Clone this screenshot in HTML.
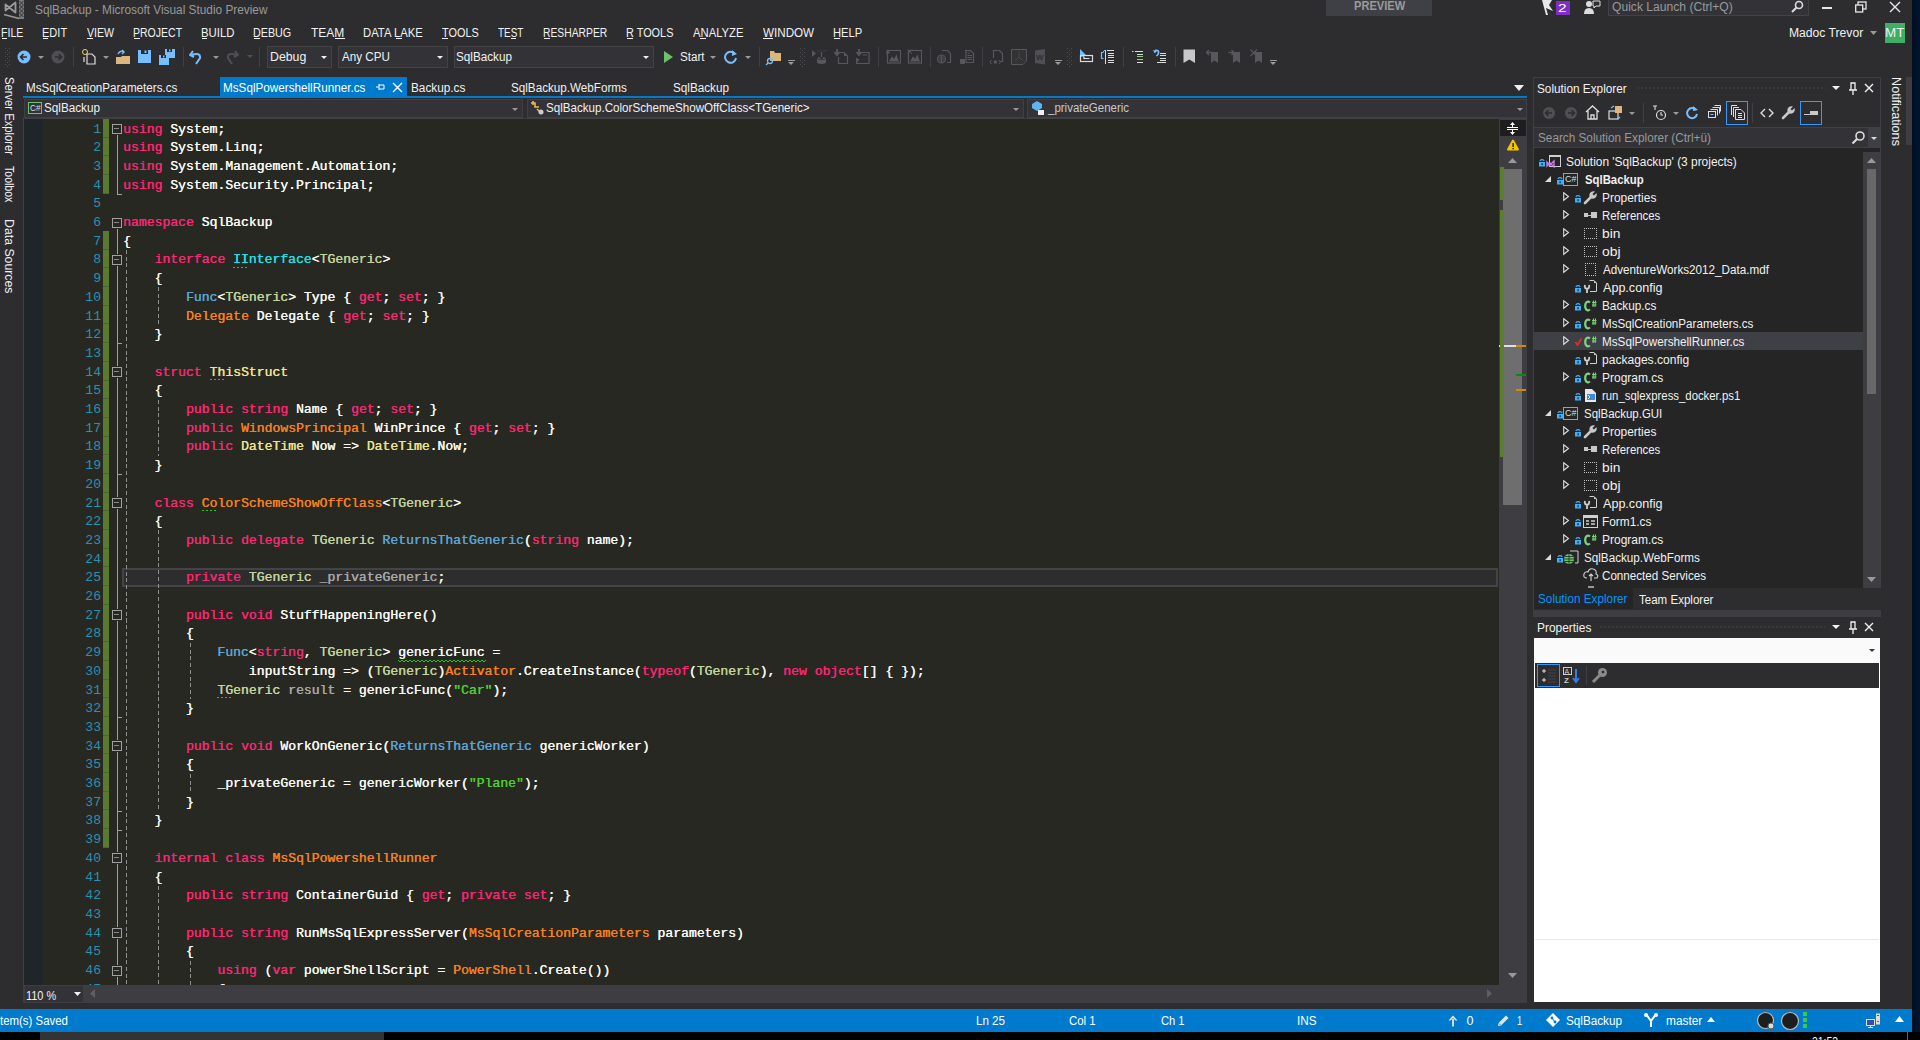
<!DOCTYPE html>
<html><head><meta charset="utf-8"><style>
*{box-sizing:border-box}
html,body{margin:0;padding:0}
body{width:1920px;height:1040px;overflow:hidden;position:relative;background:#2D2D30;font-family:"Liberation Sans",sans-serif;font-size:12px;color:#F1F1F1}
.a{position:absolute}
.t{position:absolute;white-space:pre;line-height:1}
/* editor */
#editor{position:absolute;left:24px;top:119px;width:1476px;height:866px;background:#272822;overflow:hidden}
#imargin{position:absolute;left:24px;top:119px;width:19px;height:866px;background:#1F2528}
.cl{position:absolute;left:123px;padding-top:1.5px;text-shadow:0.35px 0 0 currentColor;height:18.70px;line-height:18.70px;font-family:"Liberation Mono",monospace;font-size:13.1px;white-space:pre;color:#F8F8F2}
.ln{position:absolute;left:60px;padding-top:1.5px;width:41px;text-align:right;height:18.70px;line-height:18.70px;font-family:"Liberation Mono",monospace;font-size:13.1px;color:#2B91AF}
.k{color:#F92672}.i{color:#1EE0E6}.g{color:#C2D49C}.d{color:#5AA5D6}.o{color:#F5801F}.y{color:#EDE38C}.s{color:#50CC30}.v{color:#A8A8A8}

</style></head><body>
<svg class="a" style="left:0;top:0" width="26" height="20"><path d="M5.5 4.5 L15.5 12.5 L15.5 2.5 L5.5 10.5 Z" fill="none" stroke="#9a9a9a" stroke-width="1.8" stroke-linejoin="round"/><rect x="19" y="0" width="5" height="19" fill="#7a7a7a"/><path d="M19.5 1 L23.5 5 M19.5 5 L23.5 9 M19.5 9 L23.5 13 M19.5 13 L23.5 17 M23.5 1 L19.5 5 M23.5 5 L19.5 9 M23.5 9 L19.5 13 M23.5 13 L19.5 17" stroke="#2D2D30" stroke-width="0.9"/><path d="M4 14.5 L19 18.5" stroke="#9a9a9a" stroke-width="1.6"/></svg>
<div class="t" style="left:35.47px;top:3.53px;font-size:12.5px;color:#999999;transform:scaleX(0.9462);transform-origin:0 0;">SqlBackup - Microsoft Visual Studio Preview</div>
<div class="a" style="left:1326px;top:0;width:106px;height:16px;background:#3F3F46"></div>
<div class="t" style="left:1353.78px;top:-0.41px;font-size:12px;color:#9a9a9a;font-weight:bold;transform:scaleX(0.9249);transform-origin:0 0;">PREVIEW</div>
<svg class="a" style="left:1540px;top:0" width="16" height="16"><path d="M2 0 L12 0 L9 5 L13 11 L6 8 L8 15 L6 15 Z" fill="#e8e8e8"/></svg>
<div class="a" style="left:1556px;top:1px;width:14px;height:14px;background:#7E2FC8"></div>
<div class="t" style="left:1558.23px;top:2.71px;font-size:11px;color:#fff;transform:scaleX(1.3986);transform-origin:0 0;">2</div>
<svg class="a" style="left:1583px;top:0" width="18" height="16"><circle cx="6" cy="4" r="3" fill="#ddd"/><path d="M1 14 Q1 8 6 8 Q11 8 11 14 Z" fill="#ddd"/><path d="M10 1 L17 1 L17 6 L13 6 L11 8 L11 6 L10 6 Z" fill="none" stroke="#ddd" stroke-width="1"/></svg>
<div class="a" style="left:1608px;top:-2px;width:201px;height:18px;background:#333337;border:1px solid #434346"></div>
<div class="t" style="left:1612.46px;top:0.53px;font-size:12.5px;color:#999;transform:scaleX(0.9686);transform-origin:0 0;">Quick Launch (Ctrl+Q)</div>
<svg class="a" style="left:1790px;top:0" width="14" height="14"><circle cx="9" cy="5" r="3.5" fill="none" stroke="#ddd" stroke-width="1.6"/><path d="M6.5 7.5 L2 12" stroke="#ddd" stroke-width="2"/></svg>
<div class="a" style="left:1822px;top:7px;width:10px;height:2px;background:#e8e8e8"></div>
<svg class="a" style="left:1855px;top:1px" width="12" height="12"><rect x="3" y="1" width="8" height="7" fill="none" stroke="#e8e8e8" stroke-width="1.3"/><rect x="0.7" y="4" width="7" height="7" fill="#2D2D30" stroke="#e8e8e8" stroke-width="1.3"/></svg>
<svg class="a" style="left:1889px;top:1px" width="12" height="12"><path d="M1 1 L11 11 M11 1 L1 11" stroke="#e8e8e8" stroke-width="1.4"/></svg>
<div class="t" style="left:1.16px;top:26.53px;font-size:12.5px;color:#F1F1F1;transform:scaleX(0.8442);transform-origin:0 0;">FILE</div>
<div class="a" style="left:2.0px;top:38px;width:4.5px;height:1px;background:#F1F1F1"></div>
<div class="t" style="left:42.12px;top:26.53px;font-size:12.5px;color:#F1F1F1;transform:scaleX(0.8828);transform-origin:0 0;">EDIT</div>
<div class="a" style="left:43.0px;top:38px;width:5.1px;height:1px;background:#F1F1F1"></div>
<div class="t" style="left:86.95px;top:26.53px;font-size:12.5px;color:#F1F1F1;transform:scaleX(0.8487);transform-origin:0 0;">VIEW</div>
<div class="a" style="left:87.0px;top:38px;width:5.7px;height:1px;background:#F1F1F1"></div>
<div class="t" style="left:133.16px;top:26.53px;font-size:12.5px;color:#F1F1F1;transform:scaleX(0.8412);transform-origin:0 0;">PROJECT</div>
<div class="a" style="left:134.0px;top:38px;width:5.8px;height:1px;background:#F1F1F1"></div>
<div class="t" style="left:201.09px;top:26.53px;font-size:12.5px;color:#F1F1F1;transform:scaleX(0.9078);transform-origin:0 0;">BUILD</div>
<div class="a" style="left:202.0px;top:38px;width:5.4px;height:1px;background:#F1F1F1"></div>
<div class="t" style="left:253.14px;top:26.53px;font-size:12.5px;color:#F1F1F1;transform:scaleX(0.8599);transform-origin:0 0;">DEBUG</div>
<div class="a" style="left:254.0px;top:38px;width:6.2px;height:1px;background:#F1F1F1"></div>
<div class="t" style="left:310.76px;top:26.53px;font-size:12.5px;color:#F1F1F1;transform:scaleX(0.9570);transform-origin:0 0;">TEAM</div>
<div class="a" style="left:335.0px;top:38px;width:9.6px;height:1px;background:#F1F1F1"></div>
<div class="t" style="left:362.60px;top:26.53px;font-size:12.5px;color:#F1F1F1;transform:scaleX(0.9043);transform-origin:0 0;">DATA LAKE</div>
<div class="a" style="left:396.0px;top:38px;width:5.5px;height:1px;background:#F1F1F1"></div>
<div class="t" style="left:441.78px;top:26.53px;font-size:12.5px;color:#F1F1F1;transform:scaleX(0.8714);transform-origin:0 0;">TOOLS</div>
<div class="a" style="left:442.0px;top:38px;width:6.1px;height:1px;background:#F1F1F1"></div>
<div class="t" style="left:497.80px;top:26.53px;font-size:12.5px;color:#F1F1F1;transform:scaleX(0.7952);transform-origin:0 0;">TEST</div>
<div class="a" style="left:510.5px;top:38px;width:5.3px;height:1px;background:#F1F1F1"></div>
<div class="t" style="left:543.17px;top:26.53px;font-size:12.5px;color:#F1F1F1;transform:scaleX(0.8269);transform-origin:0 0;">RESHARPER</div>
<div class="a" style="left:544.0px;top:38px;width:6.0px;height:1px;background:#F1F1F1"></div>
<div class="t" style="left:626.13px;top:26.53px;font-size:12.5px;color:#F1F1F1;transform:scaleX(0.8710);transform-origin:0 0;">R TOOLS</div>
<div class="a" style="left:627.0px;top:38px;width:5.6px;height:1px;background:#F1F1F1"></div>
<div class="t" style="left:693.00px;top:26.53px;font-size:12.5px;color:#F1F1F1;transform:scaleX(0.9009);transform-origin:0 0;">ANALYZE</div>
<div class="a" style="left:700.1px;top:38px;width:6.1px;height:1px;background:#F1F1F1"></div>
<div class="t" style="left:762.94px;top:26.53px;font-size:12.5px;color:#F1F1F1;transform:scaleX(0.9315);transform-origin:0 0;">WINDOW</div>
<div class="a" style="left:763.0px;top:38px;width:10.2px;height:1px;background:#F1F1F1"></div>
<div class="t" style="left:833.11px;top:26.53px;font-size:12.5px;color:#F1F1F1;transform:scaleX(0.8935);transform-origin:0 0;">HELP</div>
<div class="a" style="left:834.0px;top:38px;width:5.9px;height:1px;background:#F1F1F1"></div>
<div class="t" style="left:1789.03px;top:27.28px;font-size:12.5px;color:#F1F1F1;transform:scaleX(0.9709);transform-origin:0 0;">Madoc Trevor</div>
<svg class="a" style="left:1870px;top:31px" width="8" height="5"><path d="M0 0 L7 0 L3.5 4 Z" fill="#999"/></svg>
<div class="a" style="left:1885px;top:23px;width:20px;height:20px;background:#3FAE64"></div>
<div class="t" style="left:1884.93px;top:27.03px;font-size:12.5px;color:#F1F1F1;transform:scaleX(1.0706);transform-origin:0 0;">MT</div>
<svg class="a" style="left:5px;top:47px" width="6" height="20"><rect x="0" y="1" width="1" height="1" fill="#505054"/><rect x="4" y="1" width="1" height="1" fill="#505054"/><rect x="2" y="3" width="1" height="1" fill="#505054"/><rect x="0" y="5" width="1" height="1" fill="#505054"/><rect x="4" y="5" width="1" height="1" fill="#505054"/><rect x="2" y="7" width="1" height="1" fill="#505054"/><rect x="0" y="9" width="1" height="1" fill="#505054"/><rect x="4" y="9" width="1" height="1" fill="#505054"/><rect x="2" y="11" width="1" height="1" fill="#505054"/><rect x="0" y="13" width="1" height="1" fill="#505054"/><rect x="4" y="13" width="1" height="1" fill="#505054"/><rect x="2" y="15" width="1" height="1" fill="#505054"/><rect x="0" y="17" width="1" height="1" fill="#505054"/><rect x="4" y="17" width="1" height="1" fill="#505054"/><rect x="2" y="19" width="1" height="1" fill="#505054"/></svg>
<svg class="a" style="left:17px;top:50px" width="14" height="14"><circle cx="7" cy="7" r="6.5" fill="#75BEFF"/><path d="M10 7 L4 7 M6.5 4 L3.5 7 L6.5 10" stroke="#2D2D30" stroke-width="1.6" fill="none"/></svg>
<svg class="a" style="left:38px;top:56px" width="7" height="4"><path d="M0 0 L6 0 L3.0 3 Z" fill="#999"/></svg>
<svg class="a" style="left:51px;top:50px" width="14" height="14"><circle cx="7" cy="7" r="6.5" fill="#505054"/><path d="M4 7 L10 7 M7.5 4 L10.5 7 L7.5 10" stroke="#2D2D30" stroke-width="1.6" fill="none"/></svg>
<div class="a" style="left:73px;top:47px;width:1px;height:20px;background:#3F3F46"></div>
<svg class="a" style="left:81px;top:48px" width="16" height="17"><path d="M6 6 L11 6 L14 9 L14 16 L6 16 Z M3 9 L3 14" fill="none" stroke="#dcdcdc" stroke-width="1.2"/><circle cx="4" cy="4" r="2.5" fill="none" stroke="#F0D070" stroke-width="1"/></svg>
<svg class="a" style="left:103px;top:56px" width="7" height="4"><path d="M0 0 L6 0 L3.0 3 Z" fill="#999"/></svg>
<svg class="a" style="left:115px;top:49px" width="16" height="16"><path d="M1 8 L6 8 L7 7 L15 7 L15 15 L1 15 Z" fill="#DCB67A"/><path d="M3 5 Q5 1 9 3 M7 1 L9 3 L7 5" stroke="#75BEFF" stroke-width="1.5" fill="none"/></svg>
<svg class="a" style="left:138px;top:50px" width="14" height="14"><path d="M0 0 L13 0 L13 13 L0 13 Z" fill="#75BEFF"/><rect x="3" y="0" width="7" height="4" fill="#2D2D30"/><rect x="6.5" y="0.5" width="2" height="2.5" fill="#75BEFF"/></svg>
<svg class="a" style="left:159px;top:49px" width="17" height="16"><rect x="6" y="0" width="10" height="9" fill="#75BEFF"/><rect x="8" y="0" width="5" height="3" fill="#2D2D30"/><rect x="10" y="0.5" width="1.5" height="2" fill="#75BEFF"/><rect x="0" y="6" width="10" height="10" fill="#75BEFF"/><rect x="2" y="6" width="5" height="3" fill="#2D2D30"/><rect x="4" y="6.5" width="1.5" height="2" fill="#75BEFF"/></svg>
<div class="a" style="left:183px;top:47px;width:1px;height:20px;background:#3F3F46"></div>
<svg class="a" style="left:189px;top:49px" width="14" height="16"><path d="M4 2 L1 6 L5 8 M2 6 Q12 3 11 9 L7 15" stroke="#75BEFF" stroke-width="2" fill="none"/></svg>
<svg class="a" style="left:213px;top:56px" width="7" height="4"><path d="M0 0 L6 0 L3.0 3 Z" fill="#999"/></svg>
<svg class="a" style="left:225px;top:49px" width="14" height="16"><path d="M10 2 L13 6 L9 8 M12 6 Q2 3 3 9 L7 15" stroke="#505054" stroke-width="2" fill="none"/></svg>
<svg class="a" style="left:247px;top:55px" width="7" height="4"><path d="M0 0 L6 0 L3.0 3 Z" fill="#505054"/></svg>
<div class="a" style="left:259px;top:47px;width:1px;height:20px;background:#3F3F46"></div>
<div class="a" style="left:267px;top:46px;width:65px;height:22px;background:#333337;border:1px solid #434346"></div>
<div class="t" style="left:270.01px;top:50.53px;font-size:12.5px;color:#F1F1F1;transform:scaleX(0.9857);transform-origin:0 0;">Debug</div>
<svg class="a" style="left:321px;top:56px" width="7" height="4"><path d="M0 0 L6 0 L3.0 3 Z" fill="#F1F1F1"/></svg>
<div class="a" style="left:338px;top:46px;width:110px;height:22px;background:#333337;border:1px solid #434346"></div>
<div class="t" style="left:342.00px;top:50.53px;font-size:12.5px;color:#F1F1F1;transform:scaleX(0.9318);transform-origin:0 0;">Any CPU</div>
<svg class="a" style="left:437px;top:56px" width="7" height="4"><path d="M0 0 L6 0 L3.0 3 Z" fill="#F1F1F1"/></svg>
<div class="a" style="left:454px;top:46px;width:200px;height:22px;background:#333337;border:1px solid #434346"></div>
<div class="t" style="left:456.47px;top:50.53px;font-size:12.5px;color:#F1F1F1;transform:scaleX(0.9372);transform-origin:0 0;">SqlBackup</div>
<svg class="a" style="left:643px;top:56px" width="7" height="4"><path d="M0 0 L6 0 L3.0 3 Z" fill="#F1F1F1"/></svg>
<svg class="a" style="left:664px;top:51px" width="10" height="13"><path d="M0 0 L9 6 L0 12 Z" fill="#6CC26C"/></svg>
<div class="t" style="left:680.48px;top:50.53px;font-size:12.5px;color:#F1F1F1;transform:scaleX(0.9320);transform-origin:0 0;">Start</div>
<svg class="a" style="left:710px;top:56px" width="7" height="4"><path d="M0 0 L6 0 L3.0 3 Z" fill="#999"/></svg>
<svg class="a" style="left:724px;top:49px" width="14" height="16"><path d="M11 5 A5.5 5.5 0 1 0 12 9" stroke="#75BEFF" stroke-width="2" fill="none"/><path d="M8 1 L13 5 L8 7 Z" fill="#75BEFF"/></svg>
<svg class="a" style="left:745px;top:56px" width="7" height="4"><path d="M0 0 L6 0 L3.0 3 Z" fill="#999"/></svg>
<div class="a" style="left:759px;top:47px;width:1px;height:20px;background:#3F3F46"></div>
<svg class="a" style="left:765px;top:49px" width="17" height="17"><path d="M5 2 L9 2 L10 4 L16 4 L16 12 L5 12 Z" fill="#DCB67A"/><circle cx="5" cy="12" r="2.5" fill="none" stroke="#75BEFF" stroke-width="1.3"/><path d="M3 14 L1 16" stroke="#75BEFF" stroke-width="1.5"/></svg>
<div class="a" style="left:788px;top:60px;width:7px;height:1px;background:#999"></div>
<svg class="a" style="left:788px;top:62px" width="7" height="4"><path d="M0 0 L6 0 L3.0 3 Z" fill="#999"/></svg>
<svg class="a" style="left:800px;top:47px" width="6" height="20"><rect x="0" y="1" width="1" height="1" fill="#505054"/><rect x="4" y="1" width="1" height="1" fill="#505054"/><rect x="2" y="3" width="1" height="1" fill="#505054"/><rect x="0" y="5" width="1" height="1" fill="#505054"/><rect x="4" y="5" width="1" height="1" fill="#505054"/><rect x="2" y="7" width="1" height="1" fill="#505054"/><rect x="0" y="9" width="1" height="1" fill="#505054"/><rect x="4" y="9" width="1" height="1" fill="#505054"/><rect x="2" y="11" width="1" height="1" fill="#505054"/><rect x="0" y="13" width="1" height="1" fill="#505054"/><rect x="4" y="13" width="1" height="1" fill="#505054"/><rect x="2" y="15" width="1" height="1" fill="#505054"/><rect x="0" y="17" width="1" height="1" fill="#505054"/><rect x="4" y="17" width="1" height="1" fill="#505054"/><rect x="2" y="19" width="1" height="1" fill="#505054"/></svg>
<svg class="a" style="left:811px;top:49px" width="16" height="16"><path d="M1 1 L5 4.5 L1 8 Z" fill="#58585c"/><path d="M6 9 L6 14 Q10.5 16 15 14 L15 9" fill="#58585c"/><ellipse cx="10.5" cy="9" rx="4.5" ry="1.6" fill="#58585c" stroke="#2D2D30" stroke-width="0.8"/><path d="M10.5 3 L10.5 9 M8.5 7 L10.5 9.5 L12.5 7" stroke="#2D2D30" stroke-width="1.3" fill="none"/><path d="M10.5 3 L10.5 8" stroke="#58585c" stroke-width="1.3"/><circle cx="7" cy="2" r="0.6" fill="#58585c"/><circle cx="10" cy="1" r="0.6" fill="#58585c"/><circle cx="13" cy="2" r="0.6" fill="#58585c"/><circle cx="15" cy="1.5" r="0.6" fill="#58585c"/></svg>
<svg class="a" style="left:834px;top:49px" width="15" height="16"><path d="M3 0 L3 5 M0.5 3 L3 6 L5.5 3" stroke="#58585c" stroke-width="1.8" fill="none"/><path d="M4.5 3.5 L10 3.5 L13.5 7 L13.5 14.5 L4.5 14.5 L4.5 8" stroke="#58585c" stroke-width="1.2" fill="none"/><path d="M10 3.5 L10 7 L13.5 7" fill="#58585c"/></svg>
<svg class="a" style="left:856px;top:49px" width="14" height="16"><path d="M3 0 L3 5 M0.5 3 L3 6 L5.5 3" stroke="#58585c" stroke-width="1.8" fill="none"/><path d="M5 3.5 L13 3.5 L13 14.5 L0.5 14.5 L0.5 9" stroke="#58585c" stroke-width="1.2" fill="none"/><path d="M6.5 6 L11 6 M1 10 L2.5 10.5 L1 11.5 L2.5 12.5" stroke="#58585c" stroke-width="1.1" fill="none"/></svg>
<div class="a" style="left:878px;top:47px;width:1px;height:20px;background:#3F3F46"></div>
<svg class="a" style="left:886px;top:49px" width="15" height="15"><rect x="1.5" y="1.5" width="13" height="12.5" fill="none" stroke="#58585c" stroke-width="1.2"/><path d="M3 12.5 L6 7 L8 10 L10.5 4.5 L13 12.5 Z" fill="#58585c"/><path d="M3 11 L6 6 L8 9 L10.5 4.5 L13 11" stroke="#2D2D30" stroke-width="0.8" fill="none"/><path d="M0.5 0.5 L4 3.5 L0.5 6 Z" fill="#58585c"/></svg>
<svg class="a" style="left:907px;top:49px" width="15" height="15"><rect x="1.5" y="1.5" width="13" height="12.5" fill="none" stroke="#58585c" stroke-width="1.2"/><path d="M3 12.5 L6 7 L8 10 L10.5 4.5 L13 12.5 Z" fill="#58585c"/><path d="M3 11 L6 6 L8 9 L10.5 4.5 L13 11" stroke="#2D2D30" stroke-width="0.8" fill="none"/><path d="M0.5 0.5 L5 5 M5 0.5 L0.5 5" stroke="#58585c" stroke-width="1"/></svg>
<div class="a" style="left:930px;top:47px;width:1px;height:20px;background:#3F3F46"></div>
<svg class="a" style="left:937px;top:49px" width="15" height="15"><path d="M5 1.5 L10.5 1.5 L13.5 4.5 L13.5 13.5 L10 13.5" stroke="#58585c" stroke-width="1.2" fill="none"/><circle cx="4.5" cy="10" r="4" fill="none" stroke="#58585c" stroke-width="1.1"/><path d="M0.5 10 L8.5 10 M4.5 6 L4.5 14 M1.5 8 L7.5 8 M1.5 12 L7.5 12" stroke="#58585c" stroke-width="0.9"/></svg>
<svg class="a" style="left:960px;top:49px" width="15" height="16"><path d="M5 1.5 L10.5 1.5 L13.5 4.5 L13.5 13.5 L6 13.5 L6 1.5" stroke="#58585c" stroke-width="1.2" fill="none"/><path d="M7.5 4 L10 4 M7.5 6.5 L12 6.5 M7.5 8.5 L12 8.5 M7.5 10.5 L12 10.5" stroke="#58585c" stroke-width="1"/><path d="M0 10 L0 14.5 Q2.5 15.5 5 14.5 L5 10 Z" fill="#58585c"/></svg>
<div class="a" style="left:982px;top:47px;width:1px;height:20px;background:#3F3F46"></div>
<svg class="a" style="left:989px;top:49px" width="15" height="16"><path d="M4.5 9 L4.5 1.5 L10.5 1.5 L13.5 4.5 L13.5 12.5 L11.5 12.5" stroke="#58585c" stroke-width="1.2" fill="none"/><path d="M2.5 11 L1 13 L2.5 15 M10 11 L11.5 13 L10 15" stroke="#58585c" stroke-width="1" fill="none"/><circle cx="6.3" cy="13" r="1.8" fill="#58585c"/></svg>
<svg class="a" style="left:1011px;top:49px" width="16" height="16"><path d="M0.5 0.5 L15.5 0.5 L15.5 12 L12 15.5 L0.5 15.5 Z" fill="#333336" stroke="#58585c" stroke-width="1"/><path d="M8 3 L8 8 L4 12 M8 8 L12 12" stroke="#48484c" stroke-width="1" fill="none"/></svg>
<svg class="a" style="left:1035px;top:49px" width="10" height="16"><path d="M0 1.5 L10 0 L10 15.5 L0 14 Z" fill="#505054"/><text x="1" y="11" font-size="8" font-weight="bold" fill="#2D2D30" font-family="Liberation Sans">W</text></svg>
<div class="a" style="left:1055px;top:60px;width:7px;height:1px;background:#999"></div>
<svg class="a" style="left:1055px;top:62px" width="7" height="4"><path d="M0 0 L6 0 L3.0 3 Z" fill="#999"/></svg>
<svg class="a" style="left:1067px;top:47px" width="6" height="20"><rect x="0" y="1" width="1" height="1" fill="#505054"/><rect x="4" y="1" width="1" height="1" fill="#505054"/><rect x="2" y="3" width="1" height="1" fill="#505054"/><rect x="0" y="5" width="1" height="1" fill="#505054"/><rect x="4" y="5" width="1" height="1" fill="#505054"/><rect x="2" y="7" width="1" height="1" fill="#505054"/><rect x="0" y="9" width="1" height="1" fill="#505054"/><rect x="4" y="9" width="1" height="1" fill="#505054"/><rect x="2" y="11" width="1" height="1" fill="#505054"/><rect x="0" y="13" width="1" height="1" fill="#505054"/><rect x="4" y="13" width="1" height="1" fill="#505054"/><rect x="2" y="15" width="1" height="1" fill="#505054"/><rect x="0" y="17" width="1" height="1" fill="#505054"/><rect x="4" y="17" width="1" height="1" fill="#505054"/><rect x="2" y="19" width="1" height="1" fill="#505054"/></svg>
<svg class="a" style="left:1079px;top:49px" width="15" height="15"><path d="M1 0 L1 9 L3.3 7 L5 10.5 L6.5 9.8 L4.8 6.5 L7.5 6.5 Z" fill="#75BEFF"/><rect x="1.5" y="6.5" width="12" height="6" fill="none" stroke="#dcdcdc" stroke-width="1.2"/><path d="M4.5 9.5 L10.5 9.5" stroke="#dcdcdc" stroke-width="1.1"/></svg>
<svg class="a" style="left:1100px;top:49px" width="16" height="16"><path d="M3.5 3.5 L1.5 3.5 L1.5 9.5 L3.5 9.5" stroke="#75BEFF" stroke-width="1.2" fill="none"/><path d="M3 3 L5 1" stroke="#75BEFF" stroke-width="1"/><path d="M5.5 1 L5.5 15 M7 1.5 L14 1.5 M8 4.5 L14 4.5 M8 6.5 L14 6.5 M8 8.5 L14 8.5 M8 11.5 L14 11.5 M8 13.5 L14 13.5" stroke="#dcdcdc" stroke-width="1"/></svg>
<div class="a" style="left:1123px;top:47px;width:1px;height:20px;background:#3F3F46"></div>
<svg class="a" style="left:1132px;top:49px" width="12" height="14"><path d="M0 2.5 L1.5 2.5 M3 2.5 L11 2.5 M5 13.5 L11 13.5 M5 5.5 L11 5.5" stroke="#dcdcdc" stroke-width="1"/><path d="M5 7.5 L11 7.5 M5 10.5 L11 10.5" stroke="#8BD27A" stroke-width="1"/></svg>
<svg class="a" style="left:1153px;top:49px" width="14" height="16"><path d="M1.5 3.5 Q2 0.5 4.5 1.5 Q6.5 2.5 5 5.5 L3.5 7" stroke="#75BEFF" stroke-width="1.6" fill="none"/><path d="M0 1 L1.5 4 L4 2.5" fill="#75BEFF"/><path d="M7 4.5 L13 4.5 M7 6.5 L13 6.5 M7 9.5 L13 9.5 M7 11.5 L13 11.5 M4 13.5 L13 13.5" stroke="#dcdcdc" stroke-width="1"/></svg>
<div class="a" style="left:1175px;top:47px;width:1px;height:20px;background:#3F3F46"></div>
<svg class="a" style="left:1183px;top:49px" width="13" height="15"><path d="M0.5 0.5 L12 0.5 L12 14 L6.3 10.5 L0.5 14 Z" fill="#c8c8c8"/></svg>
<svg class="a" style="left:1206px;top:49px" width="13" height="15"><path d="M5 3 L12 3 L12 14 L8.5 11.5 L5 14 Z" fill="#58585c"/><path d="M0.5 3.5 L6 3.5 M3 1 L0.5 3.5 L3 6" stroke="#58585c" stroke-width="1.3" fill="none"/></svg>
<svg class="a" style="left:1228px;top:49px" width="13" height="15"><path d="M5 3 L12 3 L12 14 L8.5 11.5 L5 14 Z" fill="#58585c"/><path d="M0.5 3.5 L6 3.5 M3.5 1 L6 3.5 L3.5 6" stroke="#58585c" stroke-width="1.3" fill="none"/></svg>
<svg class="a" style="left:1250px;top:49px" width="13" height="15"><path d="M5 3 L12 3 L12 14 L8.5 11.5 L5 14 Z" fill="#58585c"/><path d="M0.5 0.5 L7 7 M7 0.5 L0.5 7" stroke="#58585c" stroke-width="1.3" fill="none"/></svg>
<div class="a" style="left:1270px;top:60px;width:7px;height:1px;background:#999"></div>
<svg class="a" style="left:1270px;top:62px" width="7" height="4"><path d="M0 0 L6 0 L3.0 3 Z" fill="#999"/></svg>
<div class="a" style="left:14px;top:76.6px;transform-origin:0 0;transform:rotate(90deg)"><div class="t" style="left:-0.51px;top:-1.47px;font-size:12.5px;color:#F1F1F1;transform:scaleX(0.8993);transform-origin:0 0;">Server Explorer</div></div>
<div class="a" style="left:14px;top:166.0px;transform-origin:0 0;transform:rotate(90deg)"><div class="t" style="left:-0.21px;top:-1.47px;font-size:12.5px;color:#F1F1F1;transform:scaleX(0.8433);transform-origin:0 0;">Toolbox</div></div>
<div class="a" style="left:14px;top:220.4px;transform-origin:0 0;transform:rotate(90deg)"><div class="t" style="left:-0.98px;top:-1.47px;font-size:12.5px;color:#F1F1F1;transform:scaleX(0.9837);transform-origin:0 0;">Data Sources</div></div>
<div class="a" style="left:23px;top:98px;width:1px;height:905px;background:#3F3F46"></div>
<div class="a" style="left:1900.5px;top:77.5px;transform-origin:0 0;transform:rotate(90deg)"><div class="t" style="left:-1.01px;top:-1.47px;font-size:12.5px;color:#F1F1F1;transform:scaleX(1.0131);transform-origin:0 0;">Notifications</div></div>
<div class="t" style="left:26.07px;top:81.53px;font-size:12.5px;color:#F1F1F1;transform:scaleX(0.9310);transform-origin:0 0;">MsSqlCreationParameters.cs</div>
<div class="a" style="left:220px;top:77px;width:187px;height:20px;background:#007ACC"></div>
<div class="t" style="left:223.06px;top:81.53px;font-size:12.5px;color:#fff;transform:scaleX(0.9357);transform-origin:0 0;">MsSqlPowershellRunner.cs</div>
<svg class="a" style="left:375px;top:82px" width="11" height="11"><path d="M1 5 L4 5 M4 2 L4 8 M4 3 L9 3 L9 7 L4 7" fill="none" stroke="#fff" stroke-width="1"/></svg>
<svg class="a" style="left:392px;top:82px" width="11" height="11"><path d="M1 1 L10 10 M10 1 L1 10" stroke="#fff" stroke-width="1.4"/></svg>
<div class="t" style="left:411.06px;top:81.53px;font-size:12.5px;color:#F1F1F1;transform:scaleX(0.9422);transform-origin:0 0;">Backup.cs</div>
<div class="t" style="left:511.47px;top:81.53px;font-size:12.5px;color:#F1F1F1;transform:scaleX(0.9340);transform-origin:0 0;">SqlBackup.WebForms</div>
<div class="t" style="left:673.47px;top:81.53px;font-size:12.5px;color:#F1F1F1;transform:scaleX(0.9372);transform-origin:0 0;">SqlBackup</div>
<svg class="a" style="left:1514px;top:85px" width="11" height="7"><path d="M0 0 L10 0 L5 6 Z" fill="#F1F1F1"/></svg>
<div class="a" style="left:23px;top:96px;width:1504px;height:2px;background:#007ACC"></div>
<div class="a" style="left:23px;top:98px;width:1504px;height:21px;background:#2D2D30;border-bottom:1px solid #3F3F46"></div>
<div class="a" style="left:24px;top:99px;width:499px;height:19px;border:1px solid #3F3F46;background:#333337"></div>
<div class="a" style="left:527px;top:99px;width:497px;height:19px;border:1px solid #3F3F46;background:#333337"></div>
<div class="a" style="left:1027px;top:99px;width:500px;height:19px;border:1px solid #3F3F46;background:#333337"></div>
<div class="a" style="left:28px;top:102px;width:14px;height:12px;border:1px solid #6DC26D"></div>
<div class="t" style="left:29.59px;top:103.94px;font-size:9px;color:#ddd;transform:scaleX(0.9107);transform-origin:0 0;">C#</div>
<div class="t" style="left:44.47px;top:102.03px;font-size:12.5px;color:#F1F1F1;transform:scaleX(0.9372);transform-origin:0 0;">SqlBackup</div>
<svg class="a" style="left:512px;top:108px" width="7" height="4"><path d="M0 0 L6 0 L3.0 3 Z" fill="#999"/></svg>
<svg class="a" style="left:529px;top:100px" width="16" height="16"><path d="M2 3 L6 3 L6 7 L10 7 M4 1 L4 5 M8 9 L12 13" stroke="#E8B65A" stroke-width="1.6" fill="none"/><circle cx="12" cy="12" r="2.5" fill="#ccc"/></svg>
<div class="t" style="left:546.48px;top:102.03px;font-size:12.5px;color:#F1F1F1;transform:scaleX(0.9284);transform-origin:0 0;">SqlBackup.ColorSchemeShowOffClass&lt;TGeneric&gt;</div>
<svg class="a" style="left:1013px;top:108px" width="7" height="4"><path d="M0 0 L6 0 L3.0 3 Z" fill="#999"/></svg>
<svg class="a" style="left:1030px;top:100px" width="16" height="16"><path d="M2 4 L7 1 L12 4 L12 8 L7 11 L2 8 Z" fill="#5FB3F0"/><rect x="8" y="10" width="6" height="5" fill="#eee"/></svg>
<div class="t" style="left:1048.17px;top:102.03px;font-size:12.5px;color:#c8c8c8;transform:scaleX(0.9191);transform-origin:0 0;">_privateGeneric</div>
<svg class="a" style="left:1517px;top:108px" width="7" height="4"><path d="M0 0 L6 0 L3.0 3 Z" fill="#999"/></svg>
<!-- ===== EDITOR ===== -->
<div id="editor"></div>
<div id="imargin"></div>
<div class="a" style="left:122px;top:568px;width:1376px;height:19px;background:#2D2D2D;border:2px solid #424448"></div>
<div class="a" style="left:103px;top:119.00px;width:6px;height:74.80px;background:repeating-linear-gradient(#5A7A32 0 17.72px,#4C672B 17.72px 18.69px)"></div>
<div class="a" style="left:103px;top:231.20px;width:6px;height:617.10px;background:repeating-linear-gradient(#5A7A32 0 17.72px,#4C672B 17.72px 18.69px)"></div>
<div class="a" style="left:117px;top:135.0px;width:1px;height:60.0px;background:#A0A0A0"></div>
<div class="a" style="left:117px;top:194.0px;width:5px;height:1px;background:#A0A0A0"></div>
<div class="a" style="left:117px;top:229.0px;width:1px;height:756.0px;background:#A0A0A0"></div>
<div class="a" style="left:117px;top:343.0px;width:5px;height:1px;background:#A0A0A0"></div>
<div class="a" style="left:117px;top:474.0px;width:5px;height:1px;background:#A0A0A0"></div>
<div class="a" style="left:117px;top:717.0px;width:5px;height:1px;background:#A0A0A0"></div>
<div class="a" style="left:117px;top:811.0px;width:5px;height:1px;background:#A0A0A0"></div>
<div class="a" style="left:117px;top:830.0px;width:5px;height:1px;background:#A0A0A0"></div>
<div class="a" style="left:112px;top:124px;width:10px;height:10px;border:1px solid #A0A0A0;background:#272822;box-shadow:0 0 0 1px #272822"></div>
<div class="a" style="left:114px;top:128px;width:5px;height:1px;background:#888"></div>
<div class="a" style="left:112px;top:218px;width:10px;height:10px;border:1px solid #A0A0A0;background:#272822;box-shadow:0 0 0 1px #272822"></div>
<div class="a" style="left:114px;top:222px;width:5px;height:1px;background:#888"></div>
<div class="a" style="left:112px;top:255px;width:10px;height:10px;border:1px solid #A0A0A0;background:#272822;box-shadow:0 0 0 1px #272822"></div>
<div class="a" style="left:114px;top:259px;width:5px;height:1px;background:#888"></div>
<div class="a" style="left:112px;top:367px;width:10px;height:10px;border:1px solid #A0A0A0;background:#272822;box-shadow:0 0 0 1px #272822"></div>
<div class="a" style="left:114px;top:371px;width:5px;height:1px;background:#888"></div>
<div class="a" style="left:112px;top:498px;width:10px;height:10px;border:1px solid #A0A0A0;background:#272822;box-shadow:0 0 0 1px #272822"></div>
<div class="a" style="left:114px;top:502px;width:5px;height:1px;background:#888"></div>
<div class="a" style="left:112px;top:610px;width:10px;height:10px;border:1px solid #A0A0A0;background:#272822;box-shadow:0 0 0 1px #272822"></div>
<div class="a" style="left:114px;top:614px;width:5px;height:1px;background:#888"></div>
<div class="a" style="left:112px;top:741px;width:10px;height:10px;border:1px solid #A0A0A0;background:#272822;box-shadow:0 0 0 1px #272822"></div>
<div class="a" style="left:114px;top:745px;width:5px;height:1px;background:#888"></div>
<div class="a" style="left:112px;top:853px;width:10px;height:10px;border:1px solid #A0A0A0;background:#272822;box-shadow:0 0 0 1px #272822"></div>
<div class="a" style="left:114px;top:857px;width:5px;height:1px;background:#888"></div>
<div class="a" style="left:112px;top:928px;width:10px;height:10px;border:1px solid #A0A0A0;background:#272822;box-shadow:0 0 0 1px #272822"></div>
<div class="a" style="left:114px;top:932px;width:5px;height:1px;background:#888"></div>
<div class="a" style="left:112px;top:966px;width:10px;height:10px;border:1px solid #A0A0A0;background:#272822;box-shadow:0 0 0 1px #272822"></div>
<div class="a" style="left:114px;top:970px;width:5px;height:1px;background:#888"></div>
<div class="a" style="left:126px;top:249.9px;width:1px;height:735.1px;background:repeating-linear-gradient(#8f8f8f 0 4px,transparent 4px 6.7px)"></div>
<div class="a" style="left:158px;top:287.3px;width:1px;height:37.4px;background:repeating-linear-gradient(#8f8f8f 0 4px,transparent 4px 6.7px)"></div>
<div class="a" style="left:158px;top:399.5px;width:1px;height:56.1px;background:repeating-linear-gradient(#8f8f8f 0 4px,transparent 4px 6.7px)"></div>
<div class="a" style="left:158px;top:530.4px;width:1px;height:280.5px;background:repeating-linear-gradient(#8f8f8f 0 4px,transparent 4px 6.7px)"></div>
<div class="a" style="left:158px;top:885.7px;width:1px;height:99.3px;background:repeating-linear-gradient(#8f8f8f 0 4px,transparent 4px 6.7px)"></div>
<div class="a" style="left:190px;top:642.6px;width:1px;height:56.1px;background:repeating-linear-gradient(#8f8f8f 0 4px,transparent 4px 6.7px)"></div>
<div class="a" style="left:190px;top:773.5px;width:1px;height:18.7px;background:repeating-linear-gradient(#8f8f8f 0 4px,transparent 4px 6.7px)"></div>
<div class="a" style="left:190px;top:960.5px;width:1px;height:24.5px;background:repeating-linear-gradient(#8f8f8f 0 4px,transparent 4px 6.7px)"></div>
<div class="a" style="left:233.0px;top:267.0px;width:15.7px;height:1px;background:repeating-linear-gradient(90deg,#1EC81E 0 2px,transparent 2px 4px)"></div>
<div class="a" style="left:209.5px;top:379.0px;width:15.7px;height:1px;background:repeating-linear-gradient(90deg,#1EC81E 0 2px,transparent 2px 4px)"></div>
<div class="a" style="left:201.6px;top:510.0px;width:15.7px;height:1px;background:repeating-linear-gradient(90deg,#1EC81E 0 2px,transparent 2px 4px)"></div>
<div class="a" style="left:217.3px;top:697.0px;width:15.7px;height:1px;background:repeating-linear-gradient(90deg,#1EC81E 0 2px,transparent 2px 4px)"></div>
<svg class="a" style="left:398.1px;top:659.0px" width="88" height="4"><path d="M0 1 L2 3 L4 1 L6 3 L8 1 L10 3 L12 1 L14 3 L16 1 L18 3 L20 1 L22 3 L24 1 L26 3 L28 1 L30 3 L32 1 L34 3 L36 1 L38 3 L40 1 L42 3 L44 1 L46 3 L48 1 L50 3 L52 1 L54 3 L56 1 L58 3 L60 1 L62 3 L64 1 L66 3 L68 1 L70 3 L72 1 L74 3 L76 1 L78 3 L80 1 L82 3 L84 1 L86 3 L88 1" stroke="#1EC81E" stroke-width="1" fill="none"/></svg>
<div class="cl" style="top:119.00px"><span class="k">using</span> System;</div>
<div class="ln" style="top:119.00px">1</div>
<div class="cl" style="top:137.70px"><span class="k">using</span> System.Linq;</div>
<div class="ln" style="top:137.70px">2</div>
<div class="cl" style="top:156.40px"><span class="k">using</span> System.Management.Automation;</div>
<div class="ln" style="top:156.40px">3</div>
<div class="cl" style="top:175.10px"><span class="k">using</span> System.Security.Principal;</div>
<div class="ln" style="top:175.10px">4</div>
<div class="cl" style="top:193.80px"></div>
<div class="ln" style="top:193.80px">5</div>
<div class="cl" style="top:212.50px"><span class="k">namespace</span> SqlBackup</div>
<div class="ln" style="top:212.50px">6</div>
<div class="cl" style="top:231.20px">{</div>
<div class="ln" style="top:231.20px">7</div>
<div class="cl" style="top:249.90px">    <span class="k">interface</span> <span class="i">IInterface</span>&lt;<span class="g">TGeneric</span>&gt;</div>
<div class="ln" style="top:249.90px">8</div>
<div class="cl" style="top:268.60px">    {</div>
<div class="ln" style="top:268.60px">9</div>
<div class="cl" style="top:287.30px">        <span class="d">Func</span>&lt;<span class="g">TGeneric</span>&gt; Type { <span class="k">get</span>; <span class="k">set</span>; }</div>
<div class="ln" style="top:287.30px">10</div>
<div class="cl" style="top:306.00px">        <span class="o">Delegate</span> Delegate { <span class="k">get</span>; <span class="k">set</span>; }</div>
<div class="ln" style="top:306.00px">11</div>
<div class="cl" style="top:324.70px">    }</div>
<div class="ln" style="top:324.70px">12</div>
<div class="cl" style="top:343.40px"></div>
<div class="ln" style="top:343.40px">13</div>
<div class="cl" style="top:362.10px">    <span class="k">struct</span> <span class="y">ThisStruct</span></div>
<div class="ln" style="top:362.10px">14</div>
<div class="cl" style="top:380.80px">    {</div>
<div class="ln" style="top:380.80px">15</div>
<div class="cl" style="top:399.50px">        <span class="k">public</span> <span class="k">string</span> Name { <span class="k">get</span>; <span class="k">set</span>; }</div>
<div class="ln" style="top:399.50px">16</div>
<div class="cl" style="top:418.20px">        <span class="k">public</span> <span class="o">WindowsPrincipal</span> WinPrince { <span class="k">get</span>; <span class="k">set</span>; }</div>
<div class="ln" style="top:418.20px">17</div>
<div class="cl" style="top:436.90px">        <span class="k">public</span> <span class="y">DateTime</span> Now =&gt; <span class="y">DateTime</span>.Now;</div>
<div class="ln" style="top:436.90px">18</div>
<div class="cl" style="top:455.60px">    }</div>
<div class="ln" style="top:455.60px">19</div>
<div class="cl" style="top:474.30px"></div>
<div class="ln" style="top:474.30px">20</div>
<div class="cl" style="top:493.00px">    <span class="k">class</span> <span class="o">ColorSchemeShowOffClass</span>&lt;<span class="g">TGeneric</span>&gt;</div>
<div class="ln" style="top:493.00px">21</div>
<div class="cl" style="top:511.70px">    {</div>
<div class="ln" style="top:511.70px">22</div>
<div class="cl" style="top:530.40px">        <span class="k">public</span> <span class="k">delegate</span> <span class="g">TGeneric</span> <span class="d">ReturnsThatGeneric</span>(<span class="k">string</span> name);</div>
<div class="ln" style="top:530.40px">23</div>
<div class="cl" style="top:549.10px"></div>
<div class="ln" style="top:549.10px">24</div>
<div class="cl" style="top:567.80px">        <span class="k">private</span> <span class="g">TGeneric</span><span class="v"> _privateGeneric</span>;</div>
<div class="ln" style="top:567.80px">25</div>
<div class="cl" style="top:586.50px"></div>
<div class="ln" style="top:586.50px">26</div>
<div class="cl" style="top:605.20px">        <span class="k">public</span> <span class="k">void</span> StuffHappeningHere()</div>
<div class="ln" style="top:605.20px">27</div>
<div class="cl" style="top:623.90px">        {</div>
<div class="ln" style="top:623.90px">28</div>
<div class="cl" style="top:642.60px">            <span class="d">Func</span>&lt;<span class="k">string</span>, <span class="g">TGeneric</span>&gt; genericFunc =</div>
<div class="ln" style="top:642.60px">29</div>
<div class="cl" style="top:661.30px">                inputString =&gt; (<span class="g">TGeneric</span>)<span class="o">Activator</span>.CreateInstance(<span class="k">typeof</span>(<span class="g">TGeneric</span>), <span class="k">new</span> <span class="k">object</span>[] { });</div>
<div class="ln" style="top:661.30px">30</div>
<div class="cl" style="top:680.00px">            <span class="g">TGeneric</span><span class="v"> result</span> = genericFunc(<span class="s">&quot;Car&quot;</span>);</div>
<div class="ln" style="top:680.00px">31</div>
<div class="cl" style="top:698.70px">        }</div>
<div class="ln" style="top:698.70px">32</div>
<div class="cl" style="top:717.40px"></div>
<div class="ln" style="top:717.40px">33</div>
<div class="cl" style="top:736.10px">        <span class="k">public</span> <span class="k">void</span> WorkOnGeneric(<span class="d">ReturnsThatGeneric</span> genericWorker)</div>
<div class="ln" style="top:736.10px">34</div>
<div class="cl" style="top:754.80px">        {</div>
<div class="ln" style="top:754.80px">35</div>
<div class="cl" style="top:773.50px">            _privateGeneric = genericWorker(<span class="s">&quot;Plane&quot;</span>);</div>
<div class="ln" style="top:773.50px">36</div>
<div class="cl" style="top:792.20px">        }</div>
<div class="ln" style="top:792.20px">37</div>
<div class="cl" style="top:810.90px">    }</div>
<div class="ln" style="top:810.90px">38</div>
<div class="cl" style="top:829.60px"></div>
<div class="ln" style="top:829.60px">39</div>
<div class="cl" style="top:848.30px">    <span class="k">internal</span> <span class="k">class</span> <span class="o">MsSqlPowershellRunner</span></div>
<div class="ln" style="top:848.30px">40</div>
<div class="cl" style="top:867.00px">    {</div>
<div class="ln" style="top:867.00px">41</div>
<div class="cl" style="top:885.70px">        <span class="k">public</span> <span class="k">string</span> ContainerGuid { <span class="k">get</span>; <span class="k">private</span> <span class="k">set</span>; }</div>
<div class="ln" style="top:885.70px">42</div>
<div class="cl" style="top:904.40px"></div>
<div class="ln" style="top:904.40px">43</div>
<div class="cl" style="top:923.10px">        <span class="k">public</span> <span class="k">string</span> RunMsSqlExpressServer(<span class="o">MsSqlCreationParameters</span> parameters)</div>
<div class="ln" style="top:923.10px">44</div>
<div class="cl" style="top:941.80px">        {</div>
<div class="ln" style="top:941.80px">45</div>
<div class="cl" style="top:960.50px">            <span class="k">using</span> (<span class="k">var</span> powerShellScript = <span class="o">PowerShell</span>.Create())</div>
<div class="ln" style="top:960.50px">46</div>
<div class="cl" style="top:979.20px">            {</div>
<div class="ln" style="top:979.20px">47</div>
<!-- editor vertical scrollbar -->
<div class="a" style="left:1499px;top:119px;width:28px;height:866px;background:#3E3E42"></div>
<div class="a" style="left:1500px;top:120px;width:26px;height:16px;background:#1E1E1E"></div>
<svg class="a" style="left:1505px;top:121px" width="16" height="15"><path d="M2 6.5 L13 6.5 M2 8.5 L13 8.5 M7.5 2 L7.5 6 M7.5 9 L7.5 13" stroke="#fff" stroke-width="1" fill="none"/><path d="M5 4 L7.5 1 L10 4 Z M5 11 L7.5 14 L10 11 Z" fill="#fff"/></svg>
<svg class="a" style="left:1507px;top:139px" width="14" height="14"><path d="M6 1.5 L11 10.5 L1 10.5 Z" fill="#F5C400" stroke="#F5C400" stroke-width="2" stroke-linejoin="round"/><rect x="5.5" y="4" width="1.3" height="4" fill="#111"/><rect x="5.5" y="9" width="1.3" height="1.3" fill="#111"/></svg>
<svg class="a" style="left:1508px;top:158px" width="10" height="6"><path d="M0 5 L9 5 L4.5 0 Z" fill="#999"/></svg>
<div class="a" style="left:1503px;top:169px;width:19px;height:336px;background:#6E6E6E"></div>
<div class="a" style="left:1499px;top:345px;width:17px;height:2px;background:#e0e0e0"></div>
<div class="a" style="left:1516px;top:345px;width:10px;height:2px;background:#D08A10"></div>
<div class="a" style="left:1500px;top:167px;width:4px;height:33px;background:#5A7F2E"></div>
<div class="a" style="left:1500px;top:210px;width:4px;height:247px;background:#5A7F2E"></div>

<div class="a" style="left:1516px;top:374px;width:10px;height:2px;background:#0B8A0B"></div>
<div class="a" style="left:1516px;top:389px;width:10px;height:2px;background:#D08A10"></div>
<svg class="a" style="left:1508px;top:973px" width="10" height="6"><path d="M0 0 L9 0 L4.5 5 Z" fill="#999"/></svg>
<!-- horizontal bar -->
<div class="a" style="left:23px;top:985px;width:1504px;height:18px;background:#3E3E42"></div>
<div class="a" style="left:25px;top:986px;width:58px;height:16px;background:#333337"></div>
<div class="t" style="left:26.18px;top:989.53px;font-size:12.5px;color:#F1F1F1;transform:scaleX(0.8755);transform-origin:0 0;">110 %</div>
<svg class="a" style="left:74px;top:992px" width="8" height="5"><path d="M0 0 L7 0 L3.5 4 Z" fill="#F1F1F1"/></svg>
<svg class="a" style="left:90px;top:989px" width="6" height="10"><path d="M5 0 L5 9 L0 4.5 Z" fill="#5f5f63"/></svg>
<svg class="a" style="left:1487px;top:989px" width="6" height="10"><path d="M0 0 L0 9 L5 4.5 Z" fill="#5f5f63"/></svg>
<div class="a" style="left:1533px;top:77px;width:348px;height:534px;background:#2D2D30;border:1px solid #3F3F46;border-bottom:none"></div>
<div class="t" style="left:1537.47px;top:82.93px;font-size:12.5px;color:#F1F1F1;transform:scaleX(0.9424);transform-origin:0 0;">Solution Explorer</div>
<div class="a" style="left:1636px;top:86px;width:190px;height:5px;background:radial-gradient(circle,#46464a 0.6px,transparent 0.8px) 0 0/4px 4px"></div>
<svg class="a" style="left:1832px;top:86px" width="9" height="5"><path d="M0 0 L8 0 L4.0 4 Z" fill="#F1F1F1"/></svg>
<svg class="a" style="left:1848px;top:82px" width="10" height="13"><path d="M3 1 L7 1 L7 8 L3 8 Z M1 8 L9 8 M5 8 L5 13" stroke="#F1F1F1" stroke-width="1.3" fill="none"/></svg>
<svg class="a" style="left:1864px;top:83px" width="10" height="10"><path d="M1 1 L9 9 M9 1 L1 9" stroke="#F1F1F1" stroke-width="1.4"/></svg>
<svg class="a" style="left:1542px;top:106px" width="14" height="14"><circle cx="7" cy="7" r="6" fill="#505054"/><path d="M10 7 L4 7 M6.5 4 L3.5 7 L6.5 10" stroke="#2D2D30" stroke-width="1.5" fill="none"/></svg>
<svg class="a" style="left:1564px;top:106px" width="14" height="14"><circle cx="7" cy="7" r="6" fill="#505054"/><path d="M4 7 L10 7 M7.5 4 L10.5 7 L7.5 10" stroke="#2D2D30" stroke-width="1.5" fill="none"/></svg>
<svg class="a" style="left:1585px;top:105px" width="15" height="15"><path d="M1 7 L7.5 1 L14 7 M3 6 L3 14 L12 14 L12 6 M6 14 L6 10 L9 10 L9 14" stroke="#dcdcdc" stroke-width="1.3" fill="none"/></svg>
<svg class="a" style="left:1608px;top:105px" width="16" height="15"><rect x="1" y="6" width="9" height="8" fill="none" stroke="#dcdcdc" stroke-width="1.2"/><rect x="7" y="1" width="7" height="7" fill="#DCB67A"/><path d="M3 3 L6 1 M12 12 L10 14" stroke="#75BEFF" stroke-width="1.3"/></svg>
<svg class="a" style="left:1629px;top:112px" width="7" height="4"><path d="M0 0 L6 0 L3.0 3 Z" fill="#999"/></svg>
<div class="a" style="left:1643px;top:103px;width:1px;height:20px;background:#3F3F46"></div>
<svg class="a" style="left:1652px;top:105px" width="15" height="16"><circle cx="9" cy="10" r="4.5" fill="none" stroke="#dcdcdc" stroke-width="1.2"/><path d="M9 7 L9 10 L11 10 M1 1 L5 1 M3 1 L3 5" stroke="#dcdcdc" stroke-width="1.1" fill="none"/></svg>
<svg class="a" style="left:1673px;top:112px" width="7" height="4"><path d="M0 0 L6 0 L3.0 3 Z" fill="#999"/></svg>
<svg class="a" style="left:1685px;top:105px" width="14" height="15"><path d="M11 5 A5 5 0 1 0 12 9" stroke="#75BEFF" stroke-width="2" fill="none"/><path d="M8 1 L13 5 L8 6 Z" fill="#75BEFF"/></svg>
<svg class="a" style="left:1708px;top:105px" width="13" height="13"><rect x="0.5" y="6.5" width="7" height="6" fill="none" stroke="#dcdcdc"/><path d="M2.5 9.5 L5.5 9.5" stroke="#75BEFF"/><path d="M2.5 4.5 L9.5 4.5 L9.5 10.5 M4.5 2.5 L11.5 2.5 L11.5 8.5 M6.5 0.5 L12.5 0.5 L12.5 6.5" stroke="#dcdcdc" fill="none"/></svg>
<div class="a" style="left:1726px;top:101px;width:22px;height:24px;border:1px solid #3399FF"></div>
<svg class="a" style="left:1730px;top:104px" width="16" height="16"><path d="M1.5 11 L1.5 1.5 L7 1.5 M3.5 13 L3.5 3.5 L9 3.5 M5.5 15.5 L5.5 5.5 L11 5.5 L14.5 9 L14.5 15.5 Z M8 9.5 L12 9.5 M8 11.5 L12 11.5 M8 13.5 L12 13.5" stroke="#dcdcdc" stroke-width="1" fill="none"/></svg>
<div class="a" style="left:1752px;top:103px;width:1px;height:20px;background:#3F3F46"></div>
<svg class="a" style="left:1760px;top:108px" width="14" height="10"><path d="M5 1 L1 5 L5 9 M9 1 L13 5 L9 9" stroke="#dcdcdc" stroke-width="1.4" fill="none"/></svg>
<svg class="a" style="left:1781px;top:105px" width="15" height="15"><path d="M2 13 L8 7" stroke="#c8c8c8" stroke-width="2.6" stroke-linecap="round"/><path d="M7 8 Q5 3 9 1.5 Q11 1 12 1.5 L9.5 4 L11 5.5 L13.5 3 Q14.5 6 12 8 Q10 9.5 7 8 Z" fill="#c8c8c8"/></svg>
<div class="a" style="left:1800px;top:101px;width:22px;height:24px;border:1px solid #3399FF"></div>
<div class="a" style="left:1804px;top:114px;width:14px;height:1px;background:#c8c8c8"></div><div class="a" style="left:1810px;top:111px;width:8px;height:3px;background:#c8c8c8"></div>
<div class="a" style="left:1534px;top:127px;width:346px;height:21px;background:#333337;border-top:1px solid #3F3F46;border-bottom:1px solid #3F3F46"></div>
<div class="a" style="left:1868px;top:128px;width:12px;height:19px;background:#3F3F46"></div>
<div class="t" style="left:1538.47px;top:131.53px;font-size:12.5px;color:#999;transform:scaleX(0.9406);transform-origin:0 0;">Search Solution Explorer (Ctrl+ü)</div>
<svg class="a" style="left:1851px;top:130px" width="15" height="15"><circle cx="9" cy="6" r="4" fill="none" stroke="#ddd" stroke-width="1.6"/><path d="M6 9 L1.5 13.5" stroke="#ddd" stroke-width="2.2"/></svg>
<svg class="a" style="left:1871px;top:137px" width="7" height="4"><path d="M0 0 L6 0 L3.0 3 Z" fill="#ddd"/></svg>
<div class="a" style="left:1534px;top:148px;width:346px;height:440px;background:#252526"></div>
<div class="a" style="left:1534px;top:332px;width:329px;height:18px;background:#3F3F46"></div>
<div class="a" style="left:1863px;top:152px;width:17px;height:436px;background:#3E3E42"></div>
<svg class="a" style="left:1867px;top:158px" width="10" height="6"><path d="M0 5 L9 5 L4.5 0 Z" fill="#999"/></svg>
<div class="a" style="left:1867px;top:169px;width:9px;height:225px;background:#686868"></div>
<svg class="a" style="left:1867px;top:577px" width="10" height="6"><path d="M0 0 L9 0 L4.5 5 Z" fill="#999"/></svg>
<svg class="a" style="left:1539px;top:158px" width="7" height="9"><path d="M0.8 2.8 Q3 0.3 5.2 2.8" stroke="#3FB0F5" stroke-width="1.2" fill="none"/><rect x="0" y="4" width="6" height="4.5" fill="#3FB0F5"/><rect x="2.5" y="5.2" width="1.2" height="2" fill="#252526"/></svg>
<svg class="a" style="left:1546px;top:154px" width="15" height="14"><rect x="3.5" y="1.5" width="11" height="11" fill="none" stroke="#cfcfcf" stroke-width="1"/><rect x="3" y="1" width="12" height="2" fill="#cfcfcf"/><path d="M1 8 L4 11 L8 7 L8 13 L4 9 L1 12 Z" fill="none" stroke="#C87EEA" stroke-width="1.4"/></svg>
<div class="t" style="left:1566.46px;top:156.03px;font-size:12.5px;color:#F1F1F1;transform:scaleX(0.9527);transform-origin:0 0;">Solution &#x27;SqlBackup&#x27; (3 projects)</div>
<svg class="a" style="left:1545px;top:176px" width="7" height="7"><path d="M6 0 L6 6 L0 6 Z" fill="#dcdcdc"/></svg>
<svg class="a" style="left:1557px;top:176px" width="7" height="9"><path d="M0.8 2.8 Q3 0.3 5.2 2.8" stroke="#3FB0F5" stroke-width="1.2" fill="none"/><rect x="0" y="4" width="6" height="4.5" fill="#3FB0F5"/><rect x="2.5" y="5.2" width="1.2" height="2" fill="#252526"/></svg>
<div class="a" style="left:1563px;top:173px;width:15px;height:13px;border:1px solid #6DC26D"></div><div class="t" style="left:1565px;top:175px;font-size:9px;color:#ddd">C#</div>
<div class="t" style="left:1584.66px;top:174.03px;font-size:12.5px;color:#F1F1F1;font-weight:bold;transform:scaleX(0.9076);transform-origin:0 0;">SqlBackup</div>
<svg class="a" style="left:1563px;top:192px" width="7" height="10"><path d="M0.7 0.7 L5.5 4.5 L0.7 8.3 Z" fill="none" stroke="#dcdcdc" stroke-width="1.1"/></svg>
<svg class="a" style="left:1575px;top:194px" width="7" height="9"><path d="M0.8 2.8 Q3 0.3 5.2 2.8" stroke="#3FB0F5" stroke-width="1.2" fill="none"/><rect x="0" y="4" width="6" height="4.5" fill="#3FB0F5"/><rect x="2.5" y="5.2" width="1.2" height="2" fill="#252526"/></svg>
<svg class="a" style="left:1583px;top:190px" width="15" height="15"><path d="M2 13 L8 7" stroke="#c8c8c8" stroke-width="2.6" stroke-linecap="round"/><path d="M7 8 Q5 3 9 1.5 Q11 1 12 1.5 L9.5 4 L11 5.5 L13.5 3 Q14.5 6 12 8 Q10 9.5 7 8 Z" fill="#c8c8c8"/></svg>
<div class="t" style="left:1602.05px;top:192.03px;font-size:12.5px;color:#F1F1F1;transform:scaleX(0.9539);transform-origin:0 0;">Properties</div>
<svg class="a" style="left:1563px;top:210px" width="7" height="10"><path d="M0.7 0.7 L5.5 4.5 L0.7 8.3 Z" fill="none" stroke="#dcdcdc" stroke-width="1.1"/></svg>
<div class="a" style="left:1584px;top:213px;width:4px;height:4px;background:#c8c8c8"></div><div class="a" style="left:1588px;top:215px;width:3px;height:1px;background:#c8c8c8"></div><div class="a" style="left:1591px;top:212px;width:6px;height:6px;background:#c8c8c8"></div>
<div class="t" style="left:1602.09px;top:210.03px;font-size:12.5px;color:#F1F1F1;transform:scaleX(0.9120);transform-origin:0 0;">References</div>
<svg class="a" style="left:1563px;top:228px" width="7" height="10"><path d="M0.7 0.7 L5.5 4.5 L0.7 8.3 Z" fill="none" stroke="#dcdcdc" stroke-width="1.1"/></svg>
<div class="a" style="left:1584px;top:228px;width:13px;height:11px;border:1px dotted #bdbdbd"></div>
<div class="t" style="left:1602.10px;top:228.03px;font-size:12.5px;color:#F1F1F1;transform:scaleX(1.1021);transform-origin:0 0;">bin</div>
<svg class="a" style="left:1563px;top:246px" width="7" height="10"><path d="M0.7 0.7 L5.5 4.5 L0.7 8.3 Z" fill="none" stroke="#dcdcdc" stroke-width="1.1"/></svg>
<div class="a" style="left:1584px;top:246px;width:13px;height:11px;border:1px dotted #bdbdbd"></div>
<div class="t" style="left:1602.44px;top:246.03px;font-size:12.5px;color:#F1F1F1;transform:scaleX(1.1102);transform-origin:0 0;">obj</div>
<svg class="a" style="left:1563px;top:264px" width="7" height="10"><path d="M0.7 0.7 L5.5 4.5 L0.7 8.3 Z" fill="none" stroke="#dcdcdc" stroke-width="1.1"/></svg>
<div class="a" style="left:1585px;top:263px;width:11px;height:13px;border:1px dotted #bdbdbd"></div>
<div class="t" style="left:1603.00px;top:264.03px;font-size:12.5px;color:#F1F1F1;transform:scaleX(0.9342);transform-origin:0 0;">AdventureWorks2012_Data.mdf</div>
<svg class="a" style="left:1575px;top:284px" width="7" height="9"><path d="M0.8 2.8 Q3 0.3 5.2 2.8" stroke="#3FB0F5" stroke-width="1.2" fill="none"/><rect x="0" y="4" width="6" height="4.5" fill="#3FB0F5"/><rect x="2.5" y="5.2" width="1.2" height="2" fill="#252526"/></svg>
<svg class="a" style="left:1583px;top:279px" width="16" height="16"><path d="M6.5 1.5 L11 1.5 L13.5 4 L13.5 12.5 L7 12.5" fill="none" stroke="#d0d0d0" stroke-width="1"/><path d="M11 1.5 L11 4 L13.5 4" fill="#d0d0d0"/><path d="M2 6 Q1 9 4 10 L4 14 M6 6 Q7 9 4 10" fill="none" stroke="#d0d0d0" stroke-width="1.8"/></svg>
<div class="t" style="left:1603.00px;top:282.03px;font-size:12.5px;color:#F1F1F1;transform:scaleX(1.0060);transform-origin:0 0;">App.config</div>
<svg class="a" style="left:1563px;top:300px" width="7" height="10"><path d="M0.7 0.7 L5.5 4.5 L0.7 8.3 Z" fill="none" stroke="#dcdcdc" stroke-width="1.1"/></svg>
<svg class="a" style="left:1575px;top:302px" width="7" height="9"><path d="M0.8 2.8 Q3 0.3 5.2 2.8" stroke="#3FB0F5" stroke-width="1.2" fill="none"/><rect x="0" y="4" width="6" height="4.5" fill="#3FB0F5"/><rect x="2.5" y="5.2" width="1.2" height="2" fill="#252526"/></svg>
<svg class="a" style="left:1584px;top:300px" width="14" height="12"><path d="M6 2.5 Q4.5 1.3 3.3 1.8 Q1.2 2.7 1.2 6 Q1.2 9.3 3.3 10.2 Q4.5 10.7 6 9.5" fill="none" stroke="#7ED27E" stroke-width="2.2"/><path d="M8 2.5 L12.5 2.5 M8 5 L12.5 5 M9.5 0.5 L9 7 M11.5 0.5 L11 7" stroke="#7ED27E" stroke-width="1.1"/></svg>
<div class="t" style="left:1602.06px;top:300.03px;font-size:12.5px;color:#F1F1F1;transform:scaleX(0.9422);transform-origin:0 0;">Backup.cs</div>
<svg class="a" style="left:1563px;top:318px" width="7" height="10"><path d="M0.7 0.7 L5.5 4.5 L0.7 8.3 Z" fill="none" stroke="#dcdcdc" stroke-width="1.1"/></svg>
<svg class="a" style="left:1575px;top:320px" width="7" height="9"><path d="M0.8 2.8 Q3 0.3 5.2 2.8" stroke="#3FB0F5" stroke-width="1.2" fill="none"/><rect x="0" y="4" width="6" height="4.5" fill="#3FB0F5"/><rect x="2.5" y="5.2" width="1.2" height="2" fill="#252526"/></svg>
<svg class="a" style="left:1584px;top:318px" width="14" height="12"><path d="M6 2.5 Q4.5 1.3 3.3 1.8 Q1.2 2.7 1.2 6 Q1.2 9.3 3.3 10.2 Q4.5 10.7 6 9.5" fill="none" stroke="#7ED27E" stroke-width="2.2"/><path d="M8 2.5 L12.5 2.5 M8 5 L12.5 5 M9.5 0.5 L9 7 M11.5 0.5 L11 7" stroke="#7ED27E" stroke-width="1.1"/></svg>
<div class="t" style="left:1602.07px;top:318.03px;font-size:12.5px;color:#F1F1F1;transform:scaleX(0.9310);transform-origin:0 0;">MsSqlCreationParameters.cs</div>
<svg class="a" style="left:1563px;top:336px" width="7" height="10"><path d="M0.7 0.7 L5.5 4.5 L0.7 8.3 Z" fill="none" stroke="#dcdcdc" stroke-width="1.1"/></svg>
<svg class="a" style="left:1575px;top:338px" width="7" height="8"><path d="M0.5 4 L2.5 7 L6.5 0.5" stroke="#E03030" stroke-width="1.6" fill="none"/></svg>
<svg class="a" style="left:1584px;top:336px" width="14" height="12"><path d="M6 2.5 Q4.5 1.3 3.3 1.8 Q1.2 2.7 1.2 6 Q1.2 9.3 3.3 10.2 Q4.5 10.7 6 9.5" fill="none" stroke="#7ED27E" stroke-width="2.2"/><path d="M8 2.5 L12.5 2.5 M8 5 L12.5 5 M9.5 0.5 L9 7 M11.5 0.5 L11 7" stroke="#7ED27E" stroke-width="1.1"/></svg>
<div class="t" style="left:1602.06px;top:336.03px;font-size:12.5px;color:#F1F1F1;transform:scaleX(0.9357);transform-origin:0 0;">MsSqlPowershellRunner.cs</div>
<svg class="a" style="left:1575px;top:356px" width="7" height="9"><path d="M0.8 2.8 Q3 0.3 5.2 2.8" stroke="#3FB0F5" stroke-width="1.2" fill="none"/><rect x="0" y="4" width="6" height="4.5" fill="#3FB0F5"/><rect x="2.5" y="5.2" width="1.2" height="2" fill="#252526"/></svg>
<svg class="a" style="left:1583px;top:351px" width="16" height="16"><path d="M6.5 1.5 L11 1.5 L13.5 4 L13.5 12.5 L7 12.5" fill="none" stroke="#d0d0d0" stroke-width="1"/><path d="M11 1.5 L11 4 L13.5 4" fill="#d0d0d0"/><path d="M2 6 Q1 9 4 10 L4 14 M6 6 Q7 9 4 10" fill="none" stroke="#d0d0d0" stroke-width="1.8"/></svg>
<div class="t" style="left:1602.22px;top:354.03px;font-size:12.5px;color:#F1F1F1;transform:scaleX(0.9652);transform-origin:0 0;">packages.config</div>
<svg class="a" style="left:1563px;top:372px" width="7" height="10"><path d="M0.7 0.7 L5.5 4.5 L0.7 8.3 Z" fill="none" stroke="#dcdcdc" stroke-width="1.1"/></svg>
<svg class="a" style="left:1575px;top:374px" width="7" height="9"><path d="M0.8 2.8 Q3 0.3 5.2 2.8" stroke="#3FB0F5" stroke-width="1.2" fill="none"/><rect x="0" y="4" width="6" height="4.5" fill="#3FB0F5"/><rect x="2.5" y="5.2" width="1.2" height="2" fill="#252526"/></svg>
<svg class="a" style="left:1584px;top:372px" width="14" height="12"><path d="M6 2.5 Q4.5 1.3 3.3 1.8 Q1.2 2.7 1.2 6 Q1.2 9.3 3.3 10.2 Q4.5 10.7 6 9.5" fill="none" stroke="#7ED27E" stroke-width="2.2"/><path d="M8 2.5 L12.5 2.5 M8 5 L12.5 5 M9.5 0.5 L9 7 M11.5 0.5 L11 7" stroke="#7ED27E" stroke-width="1.1"/></svg>
<div class="t" style="left:1602.04px;top:372.03px;font-size:12.5px;color:#F1F1F1;transform:scaleX(0.9600);transform-origin:0 0;">Program.cs</div>
<svg class="a" style="left:1575px;top:392px" width="7" height="9"><path d="M0.8 2.8 Q3 0.3 5.2 2.8" stroke="#3FB0F5" stroke-width="1.2" fill="none"/><rect x="0" y="4" width="6" height="4.5" fill="#3FB0F5"/><rect x="2.5" y="5.2" width="1.2" height="2" fill="#252526"/></svg>
<svg class="a" style="left:1584px;top:388px" width="13" height="15"><path d="M1 1 L8 1 L12 5 L12 14 L1 14 Z" fill="#e8e8e8"/><rect x="3" y="6" width="8" height="6" fill="#3A8DDE"/><path d="M4 7 L6 9 L4 11" stroke="#fff" fill="none"/></svg>
<div class="t" style="left:1602.26px;top:390.03px;font-size:12.5px;color:#F1F1F1;transform:scaleX(0.9084);transform-origin:0 0;">run_sqlexpress_docker.ps1</div>
<svg class="a" style="left:1545px;top:410px" width="7" height="7"><path d="M6 0 L6 6 L0 6 Z" fill="#dcdcdc"/></svg>
<svg class="a" style="left:1557px;top:410px" width="7" height="9"><path d="M0.8 2.8 Q3 0.3 5.2 2.8" stroke="#3FB0F5" stroke-width="1.2" fill="none"/><rect x="0" y="4" width="6" height="4.5" fill="#3FB0F5"/><rect x="2.5" y="5.2" width="1.2" height="2" fill="#252526"/></svg>
<div class="a" style="left:1563px;top:407px;width:15px;height:13px;border:1px solid #6DC26D"></div><div class="t" style="left:1565px;top:409px;font-size:9px;color:#ddd">C#</div>
<div class="t" style="left:1584.48px;top:408.03px;font-size:12.5px;color:#F1F1F1;transform:scaleX(0.9158);transform-origin:0 0;">SqlBackup.GUI</div>
<svg class="a" style="left:1563px;top:426px" width="7" height="10"><path d="M0.7 0.7 L5.5 4.5 L0.7 8.3 Z" fill="none" stroke="#dcdcdc" stroke-width="1.1"/></svg>
<svg class="a" style="left:1575px;top:428px" width="7" height="9"><path d="M0.8 2.8 Q3 0.3 5.2 2.8" stroke="#3FB0F5" stroke-width="1.2" fill="none"/><rect x="0" y="4" width="6" height="4.5" fill="#3FB0F5"/><rect x="2.5" y="5.2" width="1.2" height="2" fill="#252526"/></svg>
<svg class="a" style="left:1583px;top:424px" width="15" height="15"><path d="M2 13 L8 7" stroke="#c8c8c8" stroke-width="2.6" stroke-linecap="round"/><path d="M7 8 Q5 3 9 1.5 Q11 1 12 1.5 L9.5 4 L11 5.5 L13.5 3 Q14.5 6 12 8 Q10 9.5 7 8 Z" fill="#c8c8c8"/></svg>
<div class="t" style="left:1602.05px;top:426.03px;font-size:12.5px;color:#F1F1F1;transform:scaleX(0.9539);transform-origin:0 0;">Properties</div>
<svg class="a" style="left:1563px;top:444px" width="7" height="10"><path d="M0.7 0.7 L5.5 4.5 L0.7 8.3 Z" fill="none" stroke="#dcdcdc" stroke-width="1.1"/></svg>
<div class="a" style="left:1584px;top:447px;width:4px;height:4px;background:#c8c8c8"></div><div class="a" style="left:1588px;top:449px;width:3px;height:1px;background:#c8c8c8"></div><div class="a" style="left:1591px;top:446px;width:6px;height:6px;background:#c8c8c8"></div>
<div class="t" style="left:1602.09px;top:444.03px;font-size:12.5px;color:#F1F1F1;transform:scaleX(0.9120);transform-origin:0 0;">References</div>
<svg class="a" style="left:1563px;top:462px" width="7" height="10"><path d="M0.7 0.7 L5.5 4.5 L0.7 8.3 Z" fill="none" stroke="#dcdcdc" stroke-width="1.1"/></svg>
<div class="a" style="left:1584px;top:462px;width:13px;height:11px;border:1px dotted #bdbdbd"></div>
<div class="t" style="left:1602.10px;top:462.03px;font-size:12.5px;color:#F1F1F1;transform:scaleX(1.1021);transform-origin:0 0;">bin</div>
<svg class="a" style="left:1563px;top:480px" width="7" height="10"><path d="M0.7 0.7 L5.5 4.5 L0.7 8.3 Z" fill="none" stroke="#dcdcdc" stroke-width="1.1"/></svg>
<div class="a" style="left:1584px;top:480px;width:13px;height:11px;border:1px dotted #bdbdbd"></div>
<div class="t" style="left:1602.44px;top:480.03px;font-size:12.5px;color:#F1F1F1;transform:scaleX(1.1102);transform-origin:0 0;">obj</div>
<svg class="a" style="left:1575px;top:500px" width="7" height="9"><path d="M0.8 2.8 Q3 0.3 5.2 2.8" stroke="#3FB0F5" stroke-width="1.2" fill="none"/><rect x="0" y="4" width="6" height="4.5" fill="#3FB0F5"/><rect x="2.5" y="5.2" width="1.2" height="2" fill="#252526"/></svg>
<svg class="a" style="left:1583px;top:495px" width="16" height="16"><path d="M6.5 1.5 L11 1.5 L13.5 4 L13.5 12.5 L7 12.5" fill="none" stroke="#d0d0d0" stroke-width="1"/><path d="M11 1.5 L11 4 L13.5 4" fill="#d0d0d0"/><path d="M2 6 Q1 9 4 10 L4 14 M6 6 Q7 9 4 10" fill="none" stroke="#d0d0d0" stroke-width="1.8"/></svg>
<div class="t" style="left:1603.00px;top:498.03px;font-size:12.5px;color:#F1F1F1;transform:scaleX(1.0060);transform-origin:0 0;">App.config</div>
<svg class="a" style="left:1563px;top:516px" width="7" height="10"><path d="M0.7 0.7 L5.5 4.5 L0.7 8.3 Z" fill="none" stroke="#dcdcdc" stroke-width="1.1"/></svg>
<svg class="a" style="left:1575px;top:518px" width="7" height="9"><path d="M0.8 2.8 Q3 0.3 5.2 2.8" stroke="#3FB0F5" stroke-width="1.2" fill="none"/><rect x="0" y="4" width="6" height="4.5" fill="#3FB0F5"/><rect x="2.5" y="5.2" width="1.2" height="2" fill="#252526"/></svg>
<svg class="a" style="left:1583px;top:515px" width="15" height="13"><rect x="0.5" y="0.5" width="14" height="12" fill="none" stroke="#d0d0d0"/><rect x="0" y="0" width="15" height="3" fill="#d0d0d0"/><path d="M3 6 L6 6 M8 6 L12 6 M3 9 L6 9 M8 9 L12 9" stroke="#d0d0d0" stroke-width="1.3"/></svg>
<div class="t" style="left:1602.05px;top:516.03px;font-size:12.5px;color:#F1F1F1;transform:scaleX(0.9481);transform-origin:0 0;">Form1.cs</div>
<svg class="a" style="left:1563px;top:534px" width="7" height="10"><path d="M0.7 0.7 L5.5 4.5 L0.7 8.3 Z" fill="none" stroke="#dcdcdc" stroke-width="1.1"/></svg>
<svg class="a" style="left:1575px;top:536px" width="7" height="9"><path d="M0.8 2.8 Q3 0.3 5.2 2.8" stroke="#3FB0F5" stroke-width="1.2" fill="none"/><rect x="0" y="4" width="6" height="4.5" fill="#3FB0F5"/><rect x="2.5" y="5.2" width="1.2" height="2" fill="#252526"/></svg>
<svg class="a" style="left:1584px;top:534px" width="14" height="12"><path d="M6 2.5 Q4.5 1.3 3.3 1.8 Q1.2 2.7 1.2 6 Q1.2 9.3 3.3 10.2 Q4.5 10.7 6 9.5" fill="none" stroke="#7ED27E" stroke-width="2.2"/><path d="M8 2.5 L12.5 2.5 M8 5 L12.5 5 M9.5 0.5 L9 7 M11.5 0.5 L11 7" stroke="#7ED27E" stroke-width="1.1"/></svg>
<div class="t" style="left:1602.04px;top:534.03px;font-size:12.5px;color:#F1F1F1;transform:scaleX(0.9600);transform-origin:0 0;">Program.cs</div>
<svg class="a" style="left:1545px;top:554px" width="7" height="7"><path d="M6 0 L6 6 L0 6 Z" fill="#dcdcdc"/></svg>
<svg class="a" style="left:1557px;top:554px" width="7" height="9"><path d="M0.8 2.8 Q3 0.3 5.2 2.8" stroke="#3FB0F5" stroke-width="1.2" fill="none"/><rect x="0" y="4" width="6" height="4.5" fill="#3FB0F5"/><rect x="2.5" y="5.2" width="1.2" height="2" fill="#252526"/></svg>
<svg class="a" style="left:1563px;top:550px" width="16" height="15"><path d="M7 1 L15 1 L15 13 L12 13" fill="none" stroke="#d0d0d0"/><circle cx="6" cy="9" r="5" fill="#6DC26D"/><path d="M1 9 L11 9 M6 4 L6 14 M2 6.5 L10 6.5 M2 11.5 L10 11.5" stroke="#252526" stroke-width="0.8"/></svg>
<div class="t" style="left:1584.47px;top:552.03px;font-size:12.5px;color:#F1F1F1;transform:scaleX(0.9340);transform-origin:0 0;">SqlBackup.WebForms</div>
<svg class="a" style="left:1583px;top:567px" width="16" height="15"><path d="M4 11 Q0 11 1 7 Q2 4 5 5 Q6 1 10 2 Q14 3 13 7 Q16 8 14 11 L11 11" fill="none" stroke="#d0d0d0" stroke-width="1.1"/><path d="M8 7 L8 14 M6 9 L8 7 L10 9" stroke="#d0d0d0" stroke-width="1.2" fill="none"/></svg>
<div class="t" style="left:1602.42px;top:570.03px;font-size:12.5px;color:#F1F1F1;transform:scaleX(0.9295);transform-origin:0 0;">Connected Services</div>
<div class="a" style="left:1588px;top:586px;width:6px;height:2px;background:#999"></div>
<div class="a" style="left:1533px;top:588px;width:348px;height:22px;background:#2D2D30;border-left:1px solid #3F3F46"></div>
<div class="a" style="left:1534px;top:588px;width:99px;height:21px;background:#252526"></div>
<div class="t" style="left:1538.47px;top:592.53px;font-size:12.5px;color:#0097FB;transform:scaleX(0.9403);transform-origin:0 0;">Solution Explorer</div>
<div class="t" style="left:1638.77px;top:593.53px;font-size:12.5px;color:#F1F1F1;transform:scaleX(0.9236);transform-origin:0 0;">Team Explorer</div>
<div class="a" style="left:1533px;top:610px;width:348px;height:7px;background:#3E3E42"></div>
<div class="a" style="left:1533px;top:617px;width:348px;height:21px;background:#2D2D30"></div>
<div class="t" style="left:1537.05px;top:621.53px;font-size:12.5px;color:#F1F1F1;transform:scaleX(0.9539);transform-origin:0 0;">Properties</div>
<div class="a" style="left:1599px;top:625px;width:226px;height:5px;background:radial-gradient(circle,#46464a 0.6px,transparent 0.8px) 0 0/4px 4px"></div>
<svg class="a" style="left:1832px;top:625px" width="9" height="5"><path d="M0 0 L8 0 L4.0 4 Z" fill="#F1F1F1"/></svg>
<svg class="a" style="left:1848px;top:621px" width="10" height="13"><path d="M3 1 L7 1 L7 8 L3 8 Z M1 8 L9 8 M5 8 L5 13" stroke="#F1F1F1" stroke-width="1.3" fill="none"/></svg>
<svg class="a" style="left:1864px;top:622px" width="10" height="10"><path d="M1 1 L9 9 M9 1 L1 9" stroke="#F1F1F1" stroke-width="1.4"/></svg>
<div class="a" style="left:1534px;top:638px;width:346px;height:364px;background:#FFFFFF"></div><div class="a" style="left:1534px;top:638px;width:346px;height:25px;background:#FAFAFA"></div>
<svg class="a" style="left:1869px;top:649px" width="7" height="4"><path d="M0 0 L6 0 L3.0 3 Z" fill="#1E3A5F"/></svg>
<div class="a" style="left:1535px;top:663px;width:344px;height:25px;background:#2D2D30"></div>
<div class="a" style="left:1537px;top:664px;width:23px;height:23px;border:1px solid #3399FF"></div>
<svg class="a" style="left:1541px;top:668px" width="16" height="16"><path d="M1 3 L5 3 M3 1 L3 5 M1 12 L5 12 M3 10 L3 14" stroke="#ddd" stroke-width="1"/><path d="M7 2 L15 2 M7 5 L15 5 M7 8 L15 8 M7 11 L15 11 M7 14 L15 14" stroke="#444" stroke-width="1"/></svg>
<svg class="a" style="left:1563px;top:667px" width="18" height="18"><rect x="0.5" y="0.5" width="8" height="7" fill="none" stroke="#ccc"/><text x="1.5" y="7" font-size="7" fill="#ccc" font-family="Liberation Sans">A</text><text x="1" y="16" font-size="8" fill="#ccc" font-family="Liberation Sans" font-weight="bold">Z</text><path d="M13 2 L13 14 M10 11 L13 15 L16 11" stroke="#3A7BE0" stroke-width="2" fill="none"/></svg>
<div class="a" style="left:1586px;top:666px;width:1px;height:19px;background:#3F3F46"></div>
<svg class="a" style="left:1591px;top:667px" width="17" height="17"><path d="M2 15 L9 8" stroke="#8a8a8a" stroke-width="3"/><circle cx="11.5" cy="5.5" r="4.5" fill="#8a8a8a"/><circle cx="12" cy="5" r="1.3" fill="#252526"/></svg>
<div class="a" style="left:1535px;top:939px;width:344px;height:1px;background:#E8E8E8"></div>
<div class="a" style="left:1906px;top:77px;width:6px;height:68px;background:#3E3E42"></div>
<div class="a" style="left:1912px;top:0;width:8px;height:1032px;background:linear-gradient(90deg,#000E22,#00152F)"></div>
<!-- ===== STATUS BAR ===== -->
<div class="a" style="left:0;top:1009px;width:1912px;height:23px;background:#007ACC"></div>
<div class="a" style="left:0;top:1032px;width:1920px;height:8px;background:#000"></div>
<div class="a" style="left:40px;top:1032px;width:344px;height:8px;background:#333333"></div>
<div class="t" style="left:-0.17px;top:1014.83px;font-size:12.5px;color:#fff;transform:scaleX(0.9139);transform-origin:0 0;">tem(s) Saved</div>
<div class="t" style="left:976.47px;top:1014.83px;font-size:12.5px;color:#fff;transform:scaleX(0.9277);transform-origin:0 0;">Ln 25</div>
<div class="t" style="left:1069.43px;top:1014.83px;font-size:12.5px;color:#fff;transform:scaleX(0.9143);transform-origin:0 0;">Col 1</div>
<div class="t" style="left:1161.04px;top:1014.83px;font-size:12.5px;color:#fff;transform:scaleX(0.8893);transform-origin:0 0;">Ch 1</div>
<div class="t" style="left:1296.55px;top:1014.83px;font-size:12.5px;color:#fff;transform:scaleX(0.9359);transform-origin:0 0;">INS</div>
<svg class="a" style="left:1448px;top:1015px" width="10" height="12"><path d="M5 11.5 L5 4" stroke="#E8E4DC" stroke-width="1.8"/><path d="M0.5 5.5 L5 0.5 L9.5 5.5 L7.5 5.5 L5 3 L2.5 5.5 Z" fill="#E8E4DC"/></svg>
<div class="t" style="left:1466.50px;top:1014.83px;font-size:12.5px;color:#fff;transform:scaleX(1.0000);transform-origin:0 0;">0</div>
<svg class="a" style="left:1497px;top:1014px" width="13" height="13"><path d="M1 12 L1.5 9 L9 1.5 L11.5 4 L4 11.5 Z" fill="#E8E4DC"/><path d="M2 9.5 L3.5 11" stroke="#007ACC" stroke-width="0.8"/></svg>
<div class="t" style="left:1517.31px;top:1014.83px;font-size:12.5px;color:#fff;transform:scaleX(0.7356);transform-origin:0 0;">1</div>
<svg class="a" style="left:1545px;top:1012px" width="16" height="16"><path d="M8 1 L15 8 L8 15 L1 8 Z" fill="#fff"/><circle cx="7" cy="6" r="1.4" fill="#007ACC"/><circle cx="10" cy="10" r="1.4" fill="#007ACC"/><path d="M7 6 L10 10" stroke="#007ACC"/></svg>
<div class="t" style="left:1566.47px;top:1014.83px;font-size:12.5px;color:#fff;transform:scaleX(0.9372);transform-origin:0 0;">SqlBackup</div>
<svg class="a" style="left:1643px;top:1012px" width="16" height="16"><path d="M3 2 L8 9 L13 2 M8 9 L8 15" stroke="#fff" stroke-width="2" fill="none"/><circle cx="3" cy="3" r="2" fill="#fff"/><circle cx="13" cy="3" r="2" fill="#fff"/></svg>
<div class="t" style="left:1665.93px;top:1014.83px;font-size:12.5px;color:#fff;transform:scaleX(0.9492);transform-origin:0 0;">master</div>
<svg class="a" style="left:1707px;top:1017px" width="9" height="6"><path d="M0 5 L8 5 L4 0 Z" fill="#fff"/></svg>
<svg class="a" style="left:1756px;top:1011px" width="20" height="20"><circle cx="9.5" cy="9.5" r="8" fill="#1e1e1e" stroke="#bbb" stroke-width="1.2"/><circle cx="15" cy="15" r="3" fill="#ddd" stroke="#555"/></svg>
<svg class="a" style="left:1780px;top:1011px" width="20" height="20"><circle cx="10" cy="10" r="8.5" fill="#1e1e1e" stroke="#bbb" stroke-width="1.2"/></svg>
<div class="a" style="left:1803px;top:1012px;width:4px;height:16px;background:repeating-linear-gradient(#3DCB3D 0 4px,transparent 4px 6px)"></div>
<svg class="a" style="left:1866px;top:1013px" width="15" height="15"><rect x="0.5" y="6.5" width="8" height="6" fill="#2D4FB8" stroke="#E8DCC8" stroke-width="1"/><path d="M2 14.5 L7 14.5 M4.5 12.5 L4.5 14.5" stroke="#E8DCC8"/><rect x="10" y="0.5" width="4" height="11" fill="#E8DCC8"/><rect x="11" y="2" width="2" height="1" fill="#2D4FB8"/><circle cx="12" cy="8.5" r="0.8" fill="#2D4FB8"/></svg>
<div class="t" style="left:1812.48px;top:1035.53px;font-size:12.5px;color:#fff;transform:scaleX(0.8299);transform-origin:0 0;">21:53</div>
<div class="a" style="left:1907px;top:1032px;width:1px;height:8px;background:#666"></div>
<svg class="a" style="left:1895px;top:1016px" width="10" height="7"><path d="M0 6 L9 6 L4.5 0 Z" fill="#fff"/></svg>

</body></html>
